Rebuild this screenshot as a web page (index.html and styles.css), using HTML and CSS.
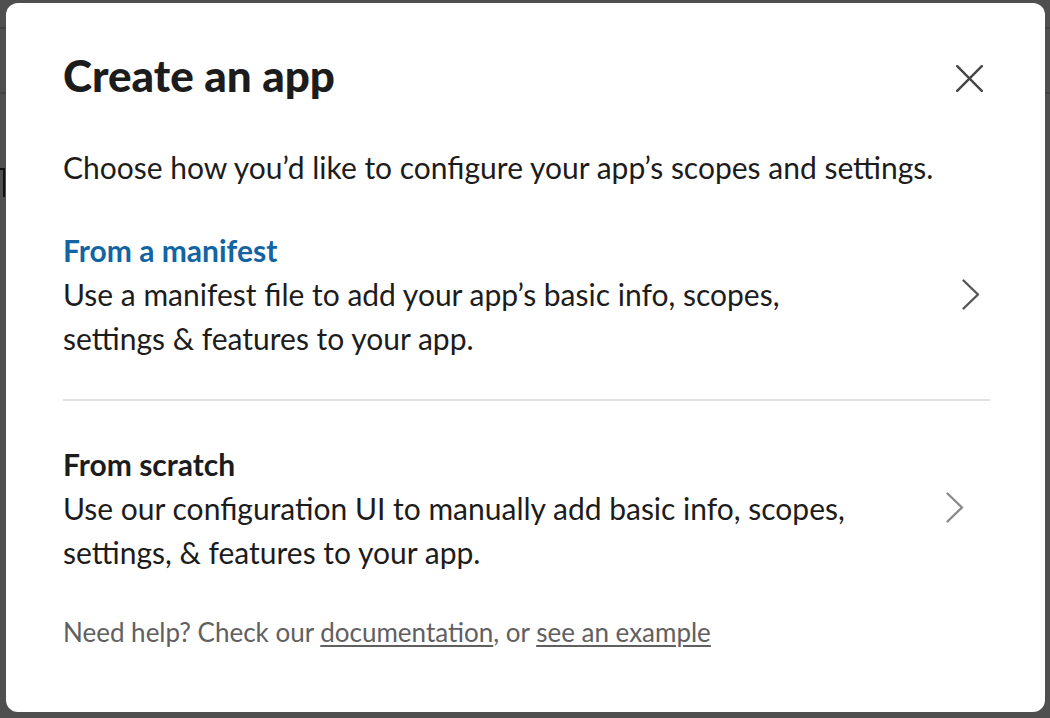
FILE: index.html
```html
<!DOCTYPE html>
<html lang="en">
<head>
<meta charset="utf-8">
<title>Create an app</title>
<link rel="stylesheet" href="styles.css">
</head>
<body>
<div class="backdrop-mark"></div>
<div class="modal">
  <header class="modal-header">
    <h1 class="modal-title">Create an app</h1>
    <button class="close" aria-label="Close">
      <svg width="27" height="27" viewBox="0 0 27 27"><path d="M1.2 1.2 L25.8 25.8 M25.8 1.2 L1.2 25.8" stroke="#454545" stroke-width="2.4" stroke-linecap="round" fill="none"/></svg>
    </button>
  </header>
  <p class="intro">Choose how you’d like to configure your app’s scopes and settings.</p>
  <a class="option option-hover" href="#">
    <div class="option-text">
      <div class="option-title">From a manifest</div>
      <div class="option-desc">Use a manifest file to add your app’s basic info, scopes,<br>settings &amp; features to your app.</div>
    </div>
    <span class="chev chev-dark">
      <svg width="18" height="31" viewBox="0 0 18 31"><path d="M1.5 1.5 L16 15.5 L1.5 29.5" stroke="#555" stroke-width="2.4" stroke-linecap="round" stroke-linejoin="round" fill="none"/></svg>
    </span>
  </a>
  <hr class="divider">
  <a class="option" href="#">
    <div class="option-text">
      <div class="option-title">From scratch</div>
      <div class="option-desc">Use our configuration UI to manually add basic info, scopes,<br>settings, &amp; features to your app.</div>
    </div>
    <span class="chev chev-light">
      <svg width="18" height="31" viewBox="0 0 18 31"><path d="M1.5 1.5 L16 15.5 L1.5 29.5" stroke="#8a8a8a" stroke-width="2.4" stroke-linecap="round" stroke-linejoin="round" fill="none"/></svg>
    </span>
  </a>
  <p class="help">Need help? Check our <a href="#">documentation</a>, or <a href="#">see an example</a></p>
</div>
</body>
</html>
```
FILE: styles.css
```css
html, body {
  margin: 0;
  padding: 0;
}
body {
  width: 1050px;
  height: 718px;
  overflow: hidden;
  background:
    linear-gradient(to bottom, transparent 27px, #434343 27px, #434343 29px, transparent 29px, transparent 92px, #434343 92px, #434343 94px, transparent 94px),
    #4f4f4f;
  font-family: Lato, "Noto Sans", sans-serif;
  color: #1d1c1d;
  position: relative;
  padding-top: 3px;
  box-sizing: border-box;
}
.backdrop-mark {
  position: absolute;
  left: 0;
  top: 168px;
  width: 5px;
  height: 29px;
  border-top: 2px solid #111;
  border-right: 2px solid #111;
  box-sizing: border-box;
}
.modal {
  margin-left: 6px;
  width: 1039px;
  height: 709px;
  background: #fff;
  border-radius: 12px;
  padding: 0 55px 0 57px;
  box-sizing: border-box;
  display: flex;
  flex-direction: column;
}
.modal-header {
  display: flex;
  justify-content: space-between;
  align-items: flex-start;
  padding-top: 47px;
}
.modal-title {
  margin: 0;
  font-size: 44px;
  line-height: 50px;
  font-weight: 900;
  color: #1d1c1d;
}
.close {
  background: none;
  border: 0;
  padding: 0;
  margin: 15px 7px 0 0;
  width: 27px;
  height: 27px;
  display: flex;
  cursor: pointer;
}
.intro {
  margin: 45px 0 0;
  font-size: 30px;
  line-height: 44px;
}
.option {
  display: flex;
  align-items: center;
  text-decoration: none;
  color: #1d1c1d;
}
.option-hover {
  margin-top: 39px;
}
.option-title {
  font-size: 30px;
  line-height: 44px;
  font-weight: 700;
}
.option-hover .option-title {
  color: #1264a3;
}
.option-desc {
  font-size: 30px;
  line-height: 44px;
}
.option-text {
  flex: 1;
}
.chev {
  display: flex;
}
.chev-dark {
  margin-right: 10px;
}
.chev-light {
  margin-right: 26px;
  margin-top: -2px;
}
.divider {
  border: 0;
  height: 2px;
  background: #e2e2e2;
  margin: 39px 0 41px;
}
.help {
  margin: 40px 0 0;
  font-size: 26px;
  line-height: 36px;
  color: #616061;
}
.help a {
  color: #616061;
  text-decoration: underline;
  text-underline-offset: 3px;
}
```
